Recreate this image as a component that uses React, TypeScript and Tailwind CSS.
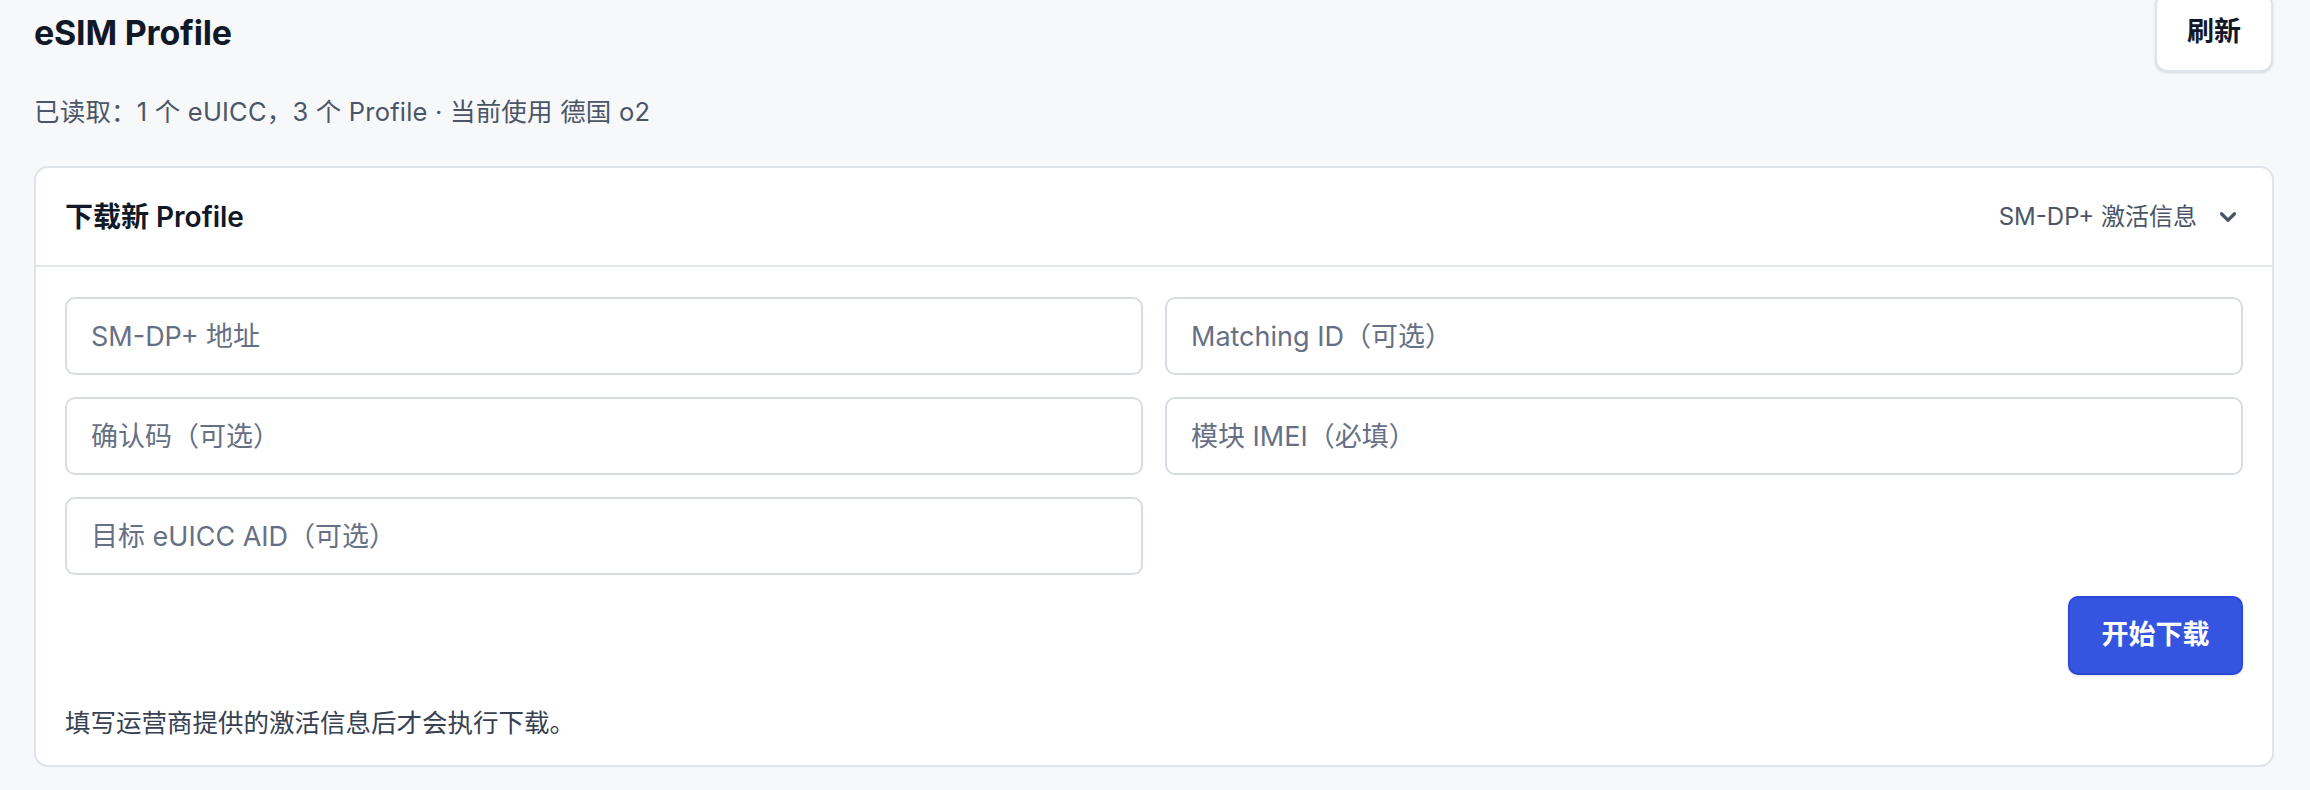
import { ChevronDown } from "lucide-react";

const font = { fontFamily: '"Inter", "Noto Sans CJK SC", sans-serif' };

const fields = [
  "SM-DP+ 地址",
  "Matching ID（可选）",
  "确认码（可选）",
  "模块 IMEI（必填）",
  "目标 eUICC AID（可选）",
];

export default function App() {
  return (
    <div
      className="flex min-h-screen flex-col bg-[#f7f8fa] pl-[34px] pr-[36px] text-[#111827]"
      style={font}
    >
      {/* 顶部标题 + 刷新 */}
      <div className="-mt-[7px] flex items-center justify-between">
        <h1 className="text-[34px] font-bold leading-none tracking-[-0.2px]">eSIM Profile</h1>
        <button className="mr-px h-[79px] w-[118px] rounded-[12px] border-2 border-[#dfe3ea] bg-white text-[27px] font-semibold text-[#111827] shadow-sm">
          刷新
        </button>
      </div>

      <p className="mt-[22px] text-[25.5px] leading-[36px] tracking-[0.2px] text-[#4b5567]">
        已读取：1 个 eUICC，3 个 Profile · 当前使用 德国 o2
      </p>

      {/* 下载新 Profile */}
      <div className="mt-[36px] rounded-[14px] border-2 border-[#dfe3ea] bg-white">
        <div className="flex h-[99px] items-center justify-between border-b-2 border-[#e2e6ed] pl-[29px] pr-[31px]">
          <h2 className="text-[28px] font-semibold">下载新 Profile</h2>
          <div className="flex items-center gap-[18px] text-[24px] text-[#4b5567]">
            <span>SM-DP+ 激活信息</span>
            <ChevronDown className="h-[26px] w-[26px]" strokeWidth={3} />
          </div>
        </div>

        <div className="px-[29px] pb-[24px] pt-[30px]">
          <div className="grid grid-cols-2 gap-[22px]">
            {fields.map((f) => (
              <input
                key={f}
                placeholder={f}
                className="h-[78px] w-full rounded-[10px] border-2 border-[#d8dce5] bg-white px-[24px] text-[27px] outline-none placeholder:text-[#667085]"
              />
            ))}
          </div>

          <div className="mt-[21px] flex justify-end">
            <button className="h-[79px] w-[175px] rounded-[10px] border-2 border-[#2a49d8] bg-[#3555e0] text-[27px] font-semibold text-white shadow-sm">
              开始下载
            </button>
          </div>

          <p className="mt-[30px] text-[25.5px] leading-[36px] text-[#374151]">
            填写运营商提供的激活信息后才会执行下载。
          </p>
        </div>
      </div>
    </div>
  );
}
